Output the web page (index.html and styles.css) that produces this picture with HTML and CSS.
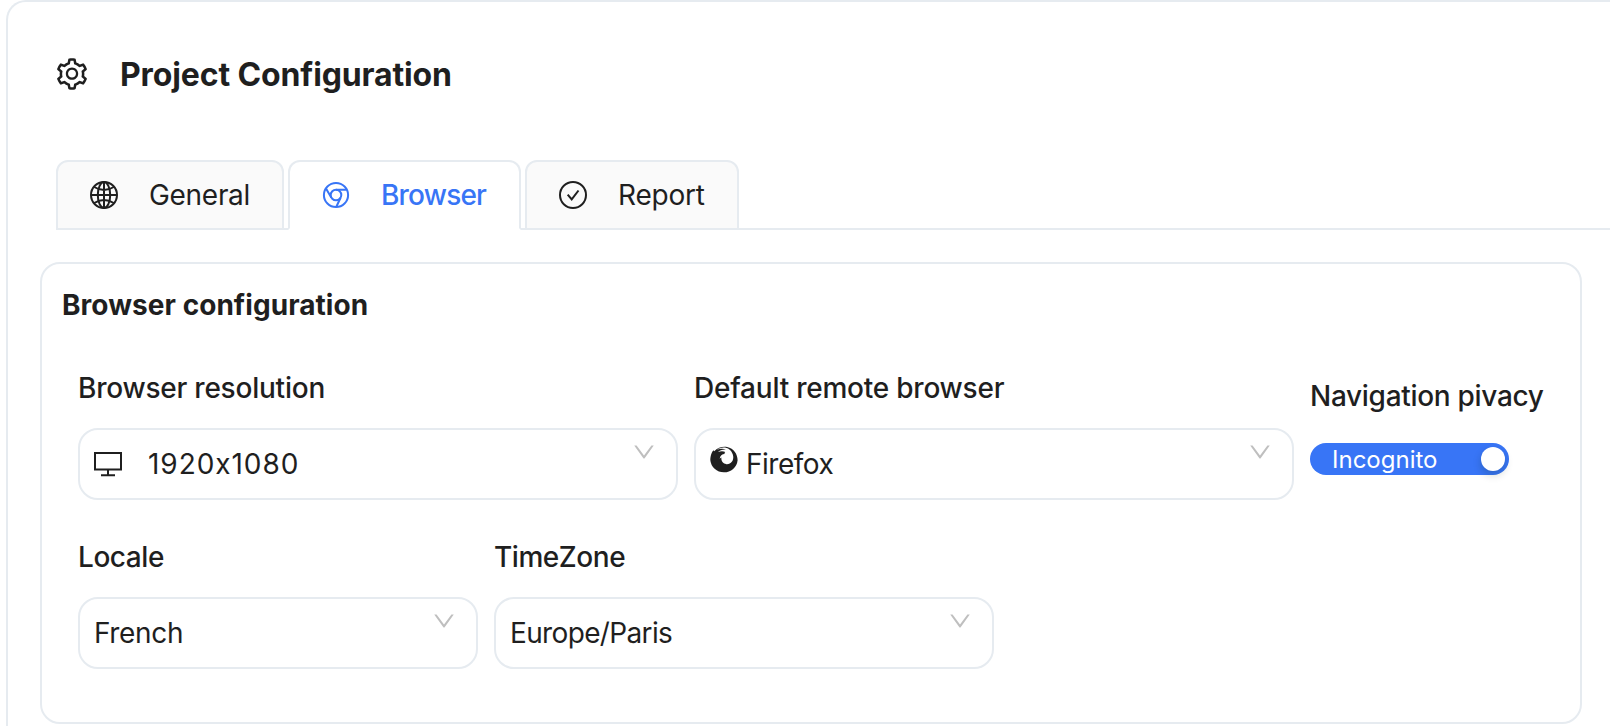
FILE: index.html
```html
<!DOCTYPE html>
<html lang="en">
<head>
<meta charset="utf-8">
<title>Project Configuration</title>
<link rel="stylesheet" href="styles.css">
</head>
<body>
<svg class="defs" aria-hidden="true">
  <symbol id="down" viewBox="0 0 1024 1024"><path d="M884 256h-75c-5.1 0-9.9 2.5-12.9 6.6L512 654.2 227.9 262.6c-3-4.1-7.8-6.6-12.9-6.6h-75c-6.5 0-10.3 7.4-6.5 12.7l352.6 486.1c12.8 17.6 39 17.6 51.7 0l352.6-486.1c3.9-5.3.1-12.7-6.4-12.7z"/></symbol>
</svg>
<main class="page">
  <header class="header">
    <svg class="gear" viewBox="0 0 1024 1024"><path d="M924.8 625.7l-65.5-56c3.1-19 4.7-38.4 4.7-57.8s-1.6-38.8-4.7-57.8l65.5-56a32.03 32.03 0 009.3-35.2l-.9-2.6a443.74 443.74 0 00-79.7-137.9l-1.8-2.1a32.12 32.12 0 00-35.1-9.5l-81.3 28.9c-30-24.6-63.5-44-99.7-57.6l-15.7-85a32.05 32.05 0 00-25.8-25.7l-2.7-.5c-52.1-9.4-106.9-9.4-159 0l-2.7.5a32.05 32.05 0 00-25.8 25.7l-15.8 85.4a351.86 351.86 0 00-99 57.4l-81.9-29.1a32 32 0 00-35.1 9.5l-1.8 2.1a446.02 446.02 0 00-79.7 137.9l-.9 2.6c-4.5 12.5-.8 26.5 9.3 35.2l66.3 56.6c-3.1 18.8-4.6 38-4.6 57.1 0 19.2 1.5 38.4 4.6 57.1L99 625.5a32.03 32.03 0 00-9.3 35.2l.9 2.6c18.1 50.4 44.9 96.9 79.7 137.9l1.8 2.1a32.12 32.12 0 0035.1 9.5l81.9-29.1c29.8 24.5 63.1 43.9 99 57.4l15.8 85.4a32.05 32.05 0 0025.8 25.7l2.7.5a449.4 449.4 0 00159 0l2.7-.5a32.05 32.05 0 0025.8-25.7l15.7-85a350 350 0 0099.7-57.6l81.3 28.9a32 32 0 0035.1-9.5l1.8-2.1c34.8-41.1 61.6-87.5 79.7-137.9l.9-2.6c4.5-12.3.8-26.3-9.3-35zM788.3 465.9c2.5 15.1 3.8 30.6 3.8 46.1s-1.3 31-3.8 46.1l-6.6 40.1 74.7 63.9a370.03 370.03 0 01-42.6 73.6L721 702.8l-31.4 25.8c-23.9 19.6-50.5 35-79.3 45.8l-38.1 14.3-17.9 97a377.5 377.5 0 01-85 0l-17.9-97.2-37.8-14.5c-28.5-10.8-55-26.2-78.7-45.7l-31.4-25.9-93.4 33.2c-17-22.9-31.2-47.6-42.6-73.6l75.5-64.5-6.5-40c-2.4-14.9-3.7-30.3-3.7-45.5 0-15.3 1.2-30.6 3.7-45.5l6.5-40-75.5-64.5c11.3-26.1 25.6-50.7 42.6-73.6l93.4 33.2 31.4-25.9c23.7-19.5 50.2-34.9 78.7-45.7l37.9-14.3 17.9-97.2c28.1-3.2 56.8-3.2 85 0l17.9 97 38.1 14.3c28.7 10.8 55.4 26.2 79.3 45.8l31.4 25.8 92.8-32.9c17 22.9 31.2 47.6 42.6 73.6L781.8 426l6.5 39.9zM512 326c-97.2 0-176 78.8-176 176s78.8 176 176 176 176-78.8 176-176-78.8-176-176-176zm79.2 255.2A111.6 111.6 0 01512 614c-29.9 0-58-11.7-79.2-32.8A111.6 111.6 0 01400 502c0-29.9 11.7-58 32.8-79.2C454 401.6 482.1 390 512 390c29.9 0 58 11.6 79.2 32.8A111.6 111.6 0 01624 502c0 29.9-11.7 58-32.8 79.2z"/></svg>
    <h1 class="title">Project Configuration</h1>
  </header>
  <nav class="tabs">
    <div class="tab tab-general">
      <svg class="tab-icon" viewBox="0 0 28 28"><g class="stroke"><circle cx="14" cy="14" r="13"/><ellipse cx="14" cy="14" rx="6.2" ry="13"/><path d="M14 1v26M1 14h26M4.2 6q9.8 6 19.6 0M4.2 22q9.8-6 19.6 0"/></g></svg>
      <span>General</span>
    </div>
    <i class="gap"></i>
    <div class="tab tab-browser active">
      <svg class="tab-icon" viewBox="0 0 28 28"><g class="stroke"><circle cx="14" cy="14" r="12.1"/><circle cx="14" cy="14" r="5.3"/><path d="M14 8.7h10.6M9.4 16.7L4 7.4M18.6 16.7L14.2 26"/></g></svg>
      <span>Browser</span>
    </div>
    <i class="gap"></i>
    <div class="tab tab-report">
      <svg class="tab-icon" viewBox="0 0 28 28"><g class="stroke"><circle cx="14" cy="14" r="13"/><path d="M8.7 13.6l4 4.8 6.8-8.9"/></g></svg>
      <span>Report</span>
    </div>
    <i class="rest"></i>
  </nav>
  <section class="panel">
    <h2 class="panel-title">Browser configuration</h2>
    <div class="row">
      <div class="field wide">
        <label class="label l-res">Browser resolution</label>
        <div class="select">
          <svg class="monitor" viewBox="0 0 28 28"><g class="stroke"><path d="M1 3h26v16.4H1zM14 19.4V25M7 25.2h14"/></g></svg>
          <span class="v-res">1920x1080</span>
          <svg class="arrow"><use href="#down"/></svg>
        </div>
      </div>
      <div class="field wide">
        <label class="label l-def">Default remote browser</label>
        <div class="select">
          <svg class="firefox" viewBox="0 0 28 28"><path fill-rule="evenodd" d="M1.600 7.200C2.200 5.500 3 4.800 3.800 4.200L4.200 5.200C7.500 1.800 12.500 .3 17 1C24 2.200 27.600 8.500 27.600 14.200A13.700 13.400 0 0 1 .3 14C.3 11.500.8 9 1.600 7.200ZM7 3.800C10 2.500 13.500 2.600 16 3.500C12.500 3.300 9.500 4.300 8 6C10.500 5 13.500 5 15.200 6C14.600 6.600 14.300 7.200 14.600 8C12.200 8.100 10 9.800 9.700 12.800C10.200 12.200 10.800 11.800 11.400 11.600C11 15 13 17.900 16.500 18.200C20.800 18.500 23.800 14.800 23.200 10.300C22.600 6 19.500 2.300 15 1.600C12 1.200 9 2.200 7 3.800Z"/></svg>
          <span class="v-ff">Firefox</span>
          <svg class="arrow"><use href="#down"/></svg>
        </div>
      </div>
      <div class="field privacy">
        <label class="label l-nav">Navigation pivacy</label>
        <div class="switch"><span class="switch-text">Incognito</span><i class="knob"></i></div>
      </div>
    </div>
    <div class="row second">
      <div class="field locale">
        <label class="label l-loc">Locale</label>
        <div class="select"><span class="v-fr">French</span><svg class="arrow"><use href="#down"/></svg></div>
      </div>
      <div class="field zone">
        <label class="label l-tz">TimeZone</label>
        <div class="select"><span class="v-tz">Europe/Paris</span><svg class="arrow"><use href="#down"/></svg></div>
      </div>
    </div>
  </section>
</main>
</body>
</html>
```
FILE: styles.css
```css
* { box-sizing: border-box; }
body {
  margin: 0;
  height: 726px;
  overflow: hidden;
  background: #fff;
  color: #1f1f1f;
  font: 28px/44px Inter, sans-serif;
  font-feature-settings: "calt" 0;
}
h1, h2 { margin: 0; }
svg { display: block; flex: none; fill: currentColor; }
span, label, h1, h2 { white-space: nowrap; }
.defs { display: none; }
.stroke { fill: none; stroke: currentColor; stroke-width: 2; }
.page {
  height: 726px;
  margin-left: 6px;
  padding: 49px 0 0 32px;
  border: 2px solid #e6ebf0;
  border-width: 2px 0 0 2px;
  border-radius: 20px 0 0 0;
}
.header { display: flex; align-items: center; height: 48px; padding-left: 14px; }
.gear { width: 36px; height: 36px; margin-bottom: 2px; }
.title { margin-left: 30px; font-size: 32px; font-weight: 700; letter-spacing: -.13px; }
.tabs { display: flex; margin: 61px 0 0 16px; height: 70px; }
.tab {
  display: flex;
  align-items: center;
  padding-left: 32px;
  border: 2px solid #e6ebf0;
  border-radius: 12px 12px 0 0;
  background: #fafafa;
}
.tab-icon { width: 28px; height: 28px; margin-right: 31px; }
.tab-general { width: 228px; letter-spacing: -.3px; }
.tab-browser { width: 233px; letter-spacing: -.8px; }
.tab-report { width: 214px; letter-spacing: -.2px; }
.active { background: #fff; color: #3875f6; border-bottom-color: transparent; font-weight: 500; }
.gap { width: 4px; border-bottom: 2px solid #e6ebf0; }
.rest { flex: 1; border-bottom: 2px solid #e6ebf0; }
.panel {
  width: 1542px;
  height: 462px;
  margin-top: 32px;
  padding: 19px 20px 0;
  border: 2px solid #e6ebf0;
  border-radius: 20px;
}
.panel-title { font-size: 28px; font-weight: 700; letter-spacing: .05px; }
.row { display: flex; gap: 16px; margin: 39px 0 0 16px; }
.second { margin-top: 35px; }
.wide { width: 600px; }
.locale { width: 400px; }
.zone { width: 500px; }
.label { display: block; height: 44px; font-weight: 500; }
.l-res, .l-def { letter-spacing: -.23px; }
.l-nav { letter-spacing: -.3px; }
.l-loc, .l-tz { letter-spacing: -.45px; }
.v-res { letter-spacing: .95px; }
.v-ff { letter-spacing: -.5px; }
.v-fr { letter-spacing: -.35px; }
.v-tz { letter-spacing: -.65px; }
.select {
  display: flex;
  align-items: center;
  height: 72px;
  margin-top: 18px;
  padding-left: 14px;
  border: 2px solid #e6ebf0;
  border-radius: 20px;
}
.monitor { width: 28px; height: 28px; margin-right: 26px; }
.firefox { width: 28px; height: 28px; margin: 0 8px 8px 0; }
.arrow { width: 26px; height: 26px; margin: 0 19px 24px auto; color: #bfbfbf; }
.privacy { padding-top: 8px; }
.switch {
  display: flex;
  align-items: center;
  justify-content: space-between;
  width: 199px;
  height: 32px;
  margin-top: 25px;
  padding: 0 4px 0 22px;
  border-radius: 16px;
  background: #3875f6;
  color: #fff;
  font-size: 24px;
}
.switch-text { padding-top: 2px; }
.knob { width: 24px; height: 24px; border-radius: 50%; background: #fff; box-shadow: 0 4px 8px rgba(0, 35, 11, .2); }
```
